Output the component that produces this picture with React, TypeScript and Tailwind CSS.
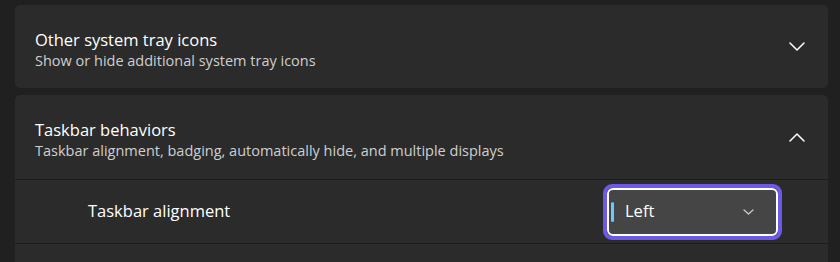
import React from 'react';

const font = { fontFamily: '"Segoe UI", "Open Sans", "Noto Sans", sans-serif' };

const Chevron: React.FC<{ up?: boolean }> = ({ up }) => (
  <svg width="16" height="9" viewBox="0 0 16 9" fill="none" className="shrink-0">
    <polyline
      points={up ? '1,8 8,1 15,8' : '1,1 8,8 15,1'}
      stroke="#ffffff"
      strokeWidth="1.5"
      strokeLinecap="round"
      strokeLinejoin="round"
    />
  </svg>
);

const Header: React.FC<{ title: string; subtitle: string; up?: boolean }> = ({ title, subtitle, up }) => (
  <div className="flex items-center justify-between pl-[20px] pr-[23px] h-[83px]">
    <div className="flex flex-col mt-[6px]">
      <span className="text-[16.5px] leading-[21px] text-white">{title}</span>
      <span className="text-[14.5px] leading-[21px] text-[#cfcfcf]">{subtitle}</span>
    </div>
    <Chevron up={up} />
  </div>
);

export default function App() {
  return (
    <div style={font} className="w-[840px] h-[262px] overflow-hidden bg-[#202020] pl-[15px] pr-[12px] pt-[5px] flex flex-col gap-[7px]">
      <div className="rounded-[5px] bg-[#2b2b2b]">
        <Header title="Other system tray icons" subtitle="Show or hide additional system tray icons" />
      </div>

      <div className="rounded-t-[5px] bg-[#2b2b2b] flex-1 flex flex-col">
        <div className="h-[84px] flex flex-col justify-center">
          <Header
            title="Taskbar behaviors"
            subtitle="Taskbar alignment, badging, automatically hide, and multiple displays"
            up
          />
        </div>
        <div className="h-px bg-[#1d1d1d]" />
        <div className="h-[63px] flex items-center justify-between pl-[73px] pr-[46px]">
          <span className="text-[16.5px] text-white">Taskbar alignment</span>
          <div className="rounded-[9px] border-[4px] border-[#6c5ae6]">
            <div className="w-[171px] h-[48px] rounded-[6px] border-2 border-white bg-[#454545] flex items-center pl-[2px] pr-[22px]">
              <span className="w-[3px] h-[20px] rounded-full bg-[#60cdff]" />
              <span className="ml-[11px] text-[16.5px] text-white flex-1">Left</span>
              <svg width="11" height="6" viewBox="0 0 11 6" fill="none">
                <polyline points="1,1 5.5,5 10,1" stroke="#cfcfcf" strokeWidth="1.2" strokeLinecap="round" strokeLinejoin="round" />
              </svg>
            </div>
          </div>
        </div>
        <div className="h-px bg-[#1d1d1d]" />
      </div>
    </div>
  );
}
